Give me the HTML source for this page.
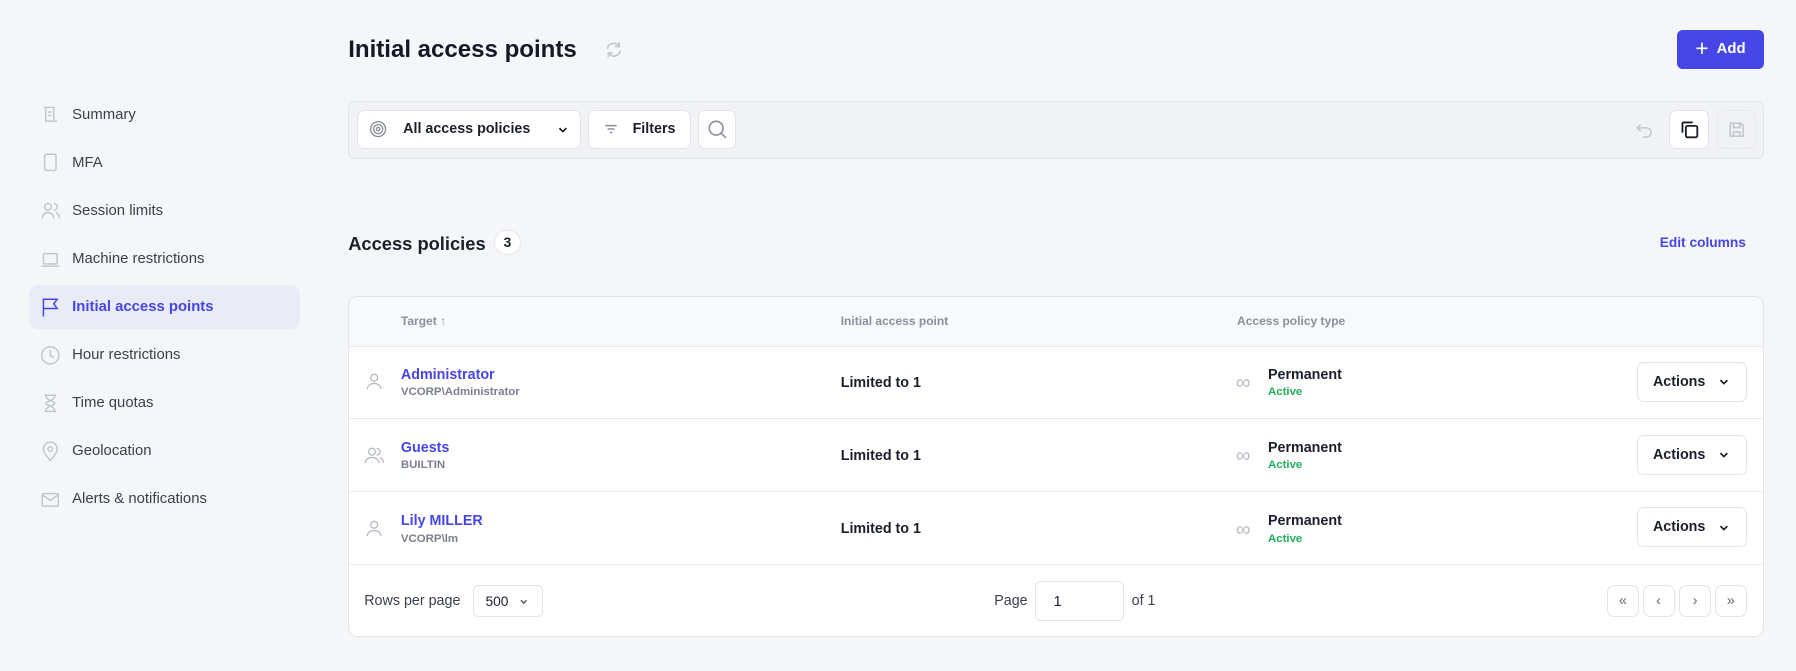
<!DOCTYPE html>
<html><head><style>
html{zoom:1.14541}
*{box-sizing:border-box;margin:0;padding:0}
body{width:1568px;height:586px;background:#f5f6f8;font-family:"Liberation Sans",sans-serif;color:#1b1f2c;position:relative;overflow:hidden;font-size:12.5px}
.a{position:absolute}
.nav{left:25px;width:237px;height:38px;display:flex;align-items:center;padding-left:10px;font-size:13px;color:#3a3f4c;border-radius:8px}
.nav svg{width:18px;height:18px;margin-right:10px;stroke:#c3c6cf;fill:none;stroke-width:1.3}
.nav.act{background:#e9ebf7;color:#4646e6;font-weight:bold}
.nav.act svg{stroke:#4646e6}
.btn{background:#fff;border:1px solid #e2e4e9;border-radius:6px;display:flex;align-items:center;justify-content:center;font-weight:bold;font-size:12.5px}
.row{left:304px;width:1236px;height:64px;border-top:1px solid #e6e8ec}
.lnk{color:#4646e6;font-weight:bold;font-size:12.5px}
.sub{color:#7a7f8c;font-size:10px;font-weight:bold}
</style></head><body>
<div class="a nav" style="top:81px"><svg viewBox="0 0 18 18"><path d="M3 3h9v12h3M5 3v12h10M7 7h3M7 10h3"/></svg>Summary</div>
<div class="a nav" style="top:123px"><svg viewBox="0 0 18 18"><rect x="4" y="2" width="10" height="14" rx="1.5"/></svg>MFA</div>
<div class="a nav" style="top:165px"><svg viewBox="0 0 18 18"><circle cx="7" cy="6" r="3"/><path d="M2 16c0-3 2-5 5-5s5 2 5 5M12 3a3 3 0 010 6M14 11c2 1 3 3 3 5"/></svg>Session limits</div>
<div class="a nav" style="top:207px"><svg viewBox="0 0 18 18"><rect x="3" y="4" width="12" height="9" rx="1"/><path d="M1 15h16"/></svg>Machine restrictions</div>
<div class="a nav act" style="top:249px"><svg viewBox="0 0 18 18"><path d="M3 17V2h12l-3 4 3 4H3"/></svg>Initial access points</div>
<div class="a nav" style="top:291px"><svg viewBox="0 0 18 18"><circle cx="9" cy="9" r="7.5"/><path d="M9 4v5l3 2"/></svg>Hour restrictions</div>
<div class="a nav" style="top:333px"><svg viewBox="0 0 18 18"><path d="M4 2h10M4 16h10M5 2c0 5 8 5 8 7s-8 2-8 7M13 2c0 5-8 5-8 7s8 2 8 7"/></svg>Time quotas</div>
<div class="a nav" style="top:375px"><svg viewBox="0 0 18 18"><path d="M9 17s-6-6-6-10a6 6 0 0112 0c0 4-6 10-6 10z"/><circle cx="9" cy="7" r="2"/></svg>Geolocation</div>
<div class="a nav" style="top:417px"><svg viewBox="0 0 18 18"><rect x="2" y="4" width="14" height="11" rx="1"/><path d="M2 5l7 5 7-5"/></svg>Alerts &amp; notifications</div>

<div class="a" style="left:304px;top:31px;font-size:21px;font-weight:bold;color:#141827">Initial access points</div>
<svg class="a" style="left:527px;top:35px" width="17" height="17" viewBox="0 0 18 18" fill="none" stroke="#c5c8d0" stroke-width="1.6"><path d="M3 8a6 6 0 0111-2M15 10a6 6 0 01-11 2M14 2v4h-4M4 16v-4h4"/></svg>
<div class="a" style="left:1464px;top:26px;width:76px;height:34px;background:#4646e6;border-radius:5px;color:#fff;font-weight:bold;font-size:13px;display:flex;align-items:center;justify-content:center"><span style="font-size:20px;font-weight:normal;margin-right:7px;margin-top:-2px">+</span>Add</div>

<div class="a" style="left:304px;top:88px;width:1236px;height:51px;background:#f1f2f5;border:1px solid #e2e4e9;border-radius:6px"></div>
<div class="a btn" style="left:312px;top:96px;width:195px;height:34px"><svg width="16" height="16" viewBox="0 0 16 16" fill="none" stroke="#8a8f9b" stroke-width="1.2" style="margin-right:14px"><circle cx="8" cy="8" r="6.5"/><circle cx="8" cy="8" r="4"/><circle cx="8" cy="8" r="1.5"/></svg>All access policies<svg width="12" height="12" viewBox="0 0 12 12" fill="none" stroke="#222" stroke-width="1.5" style="margin-left:22px"><path d="M3 4.5l3 3 3-3"/></svg></div>
<div class="a btn" style="left:513px;top:96px;width:90px;height:34px"><svg width="14" height="14" viewBox="0 0 14 14" stroke="#8a8f9b" stroke-width="1.3" style="margin-right:12px"><path d="M2 4h10M4 7h6M6 10h2"/></svg>Filters</div>
<div class="a btn" style="left:609px;top:96px;width:34px;height:34px"><svg width="18" height="18" viewBox="0 0 18 18" fill="none" stroke="#8a8f9b" stroke-width="1.4"><circle cx="8" cy="8" r="6"/><path d="M12.5 12.5l4 4"/></svg></div>
<svg class="a" style="left:1427px;top:106px" width="16" height="16" viewBox="0 0 16 16" fill="none" stroke="#c5c8d0" stroke-width="1.4"><path d="M5 3L2 6l3 3M2 6h8a4 4 0 010 8H7"/></svg>
<div class="a btn" style="left:1457px;top:96px;width:35px;height:34px"><svg width="18" height="18" viewBox="0 0 18 18" fill="none" stroke="#1b1f2c" stroke-width="1.6"><rect x="6" y="6" width="10" height="10" rx="1.5"/><path d="M3 12V4a1 1 0 011-1h8"/></svg></div>
<div class="a" style="left:1499px;top:96px;width:34px;height:34px;border:1px solid #e8e9ed;border-radius:6px;display:flex;align-items:center;justify-content:center"><svg width="17" height="17" viewBox="0 0 18 18" fill="none" stroke="#c5c8d0" stroke-width="1.5"><path d="M3 3h10l2 2v10H3z M6 3v4h6V3 M6 15v-4h6v4"/></svg></div>

<div class="a" style="left:304px;top:203px;font-size:16px;font-weight:bold">Access policies</div>
<div class="a" style="left:431px;top:201px;width:24px;height:22px;background:#fff;border:1px solid #e6e8ec;border-radius:11px;font-size:12px;font-weight:bold;display:flex;align-items:center;justify-content:center">3</div>
<div class="a lnk" style="left:1449px;top:205px;font-size:12px">Edit columns</div>

<div class="a" style="left:304px;top:258px;width:1236px;height:298px;background:#fff;border:1px solid #e2e4e9;border-radius:8px;overflow:hidden">
<div style="height:44px;background:#f8f9fb"></div></div>
<div class="a" style="left:350px;top:274px;font-size:10.5px;color:#8a8f9b;font-weight:bold">Target ↑</div>
<div class="a" style="left:734px;top:274px;font-size:10.5px;color:#8a8f9b;font-weight:bold">Initial access point</div>
<div class="a" style="left:1080px;top:274px;font-size:10.5px;color:#8a8f9b;font-weight:bold">Access policy type</div>

<div class="a row" style="top:302px"></div>
<div class="a row" style="top:365px"></div>
<div class="a row" style="top:429px"></div>
<div class="a row" style="top:492px;height:1px"></div>

<svg class="a" style="left:319px;top:325px" width="16" height="16" viewBox="0 0 16 16" fill="none" stroke="#b7bbc6" stroke-width="1.2"><circle cx="8" cy="5" r="3"/><path d="M2 15c0-3 3-5 6-5s6 2 6 5"/></svg>
<div class="a lnk" style="left:350px;top:320px">Administrator</div><div class="a sub" style="left:350px;top:337px">VCORP\Administrator</div>
<svg class="a" style="left:318px;top:389px" width="18" height="16" viewBox="0 0 18 16" fill="none" stroke="#b7bbc6" stroke-width="1.2"><circle cx="7" cy="5" r="3"/><path d="M1 15c0-3 3-5 6-5s6 2 6 5M11 2a3 3 0 010 6M14 10c2 1 3 3 3 5"/></svg>
<div class="a lnk" style="left:350px;top:384px">Guests</div><div class="a sub" style="left:350px;top:401px">BUILTIN</div>
<svg class="a" style="left:319px;top:453px" width="16" height="16" viewBox="0 0 16 16" fill="none" stroke="#b7bbc6" stroke-width="1.2"><circle cx="8" cy="5" r="3"/><path d="M2 15c0-3 3-5 6-5s6 2 6 5"/></svg>
<div class="a lnk" style="left:350px;top:448px">Lily MILLER</div><div class="a sub" style="left:350px;top:465px">VCORP\lm</div>

<div class="a" style="left:734px;top:327px;font-weight:bold">Limited to 1</div>
<div class="a" style="left:734px;top:391px;font-weight:bold">Limited to 1</div>
<div class="a" style="left:734px;top:455px;font-weight:bold">Limited to 1</div>

<div class="a" style="left:1079px;top:324px;color:#b7bbc6;font-size:18px">∞</div>
<div class="a" style="left:1107px;top:320px;font-weight:bold">Permanent</div><div class="a" style="left:1107px;top:337px;color:#1fae5b;font-size:10px;font-weight:bold">Active</div>
<div class="a" style="left:1079px;top:388px;color:#b7bbc6;font-size:18px">∞</div>
<div class="a" style="left:1107px;top:384px;font-weight:bold">Permanent</div><div class="a" style="left:1107px;top:401px;color:#1fae5b;font-size:10px;font-weight:bold">Active</div>
<div class="a" style="left:1079px;top:452px;color:#b7bbc6;font-size:18px">∞</div>
<div class="a" style="left:1107px;top:448px;font-weight:bold">Permanent</div><div class="a" style="left:1107px;top:465px;color:#1fae5b;font-size:10px;font-weight:bold">Active</div>

<div class="a btn" style="left:1429px;top:316px;width:96px;height:35px">Actions<svg width="12" height="12" viewBox="0 0 12 12" fill="none" stroke="#222" stroke-width="1.5" style="margin-left:10px"><path d="M3 4.5l3 3 3-3"/></svg></div>
<div class="a btn" style="left:1429px;top:380px;width:96px;height:35px">Actions<svg width="12" height="12" viewBox="0 0 12 12" fill="none" stroke="#222" stroke-width="1.5" style="margin-left:10px"><path d="M3 4.5l3 3 3-3"/></svg></div>
<div class="a btn" style="left:1429px;top:443px;width:96px;height:35px">Actions<svg width="12" height="12" viewBox="0 0 12 12" fill="none" stroke="#222" stroke-width="1.5" style="margin-left:10px"><path d="M3 4.5l3 3 3-3"/></svg></div>

<div class="a" style="left:318px;top:518px;color:#3a3f4c">Rows per page</div>
<div class="a" style="left:413px;top:511px;width:61px;height:28px;border:1px solid #e2e4e9;border-radius:5px;font-size:12px;display:flex;align-items:center;padding-left:10px">500<svg width="10" height="10" viewBox="0 0 12 12" fill="none" stroke="#555" stroke-width="1.5" style="margin-left:8px"><path d="M3 4.5l3 3 3-3"/></svg></div>
<div class="a" style="left:868px;top:518px;color:#3a3f4c">Page</div>
<div class="a" style="left:904px;top:507px;width:77px;height:35px;border:1px solid #e2e4e9;border-radius:5px;padding:11px 0 0 15px">1</div>
<div class="a" style="left:988px;top:518px;color:#3a3f4c">of 1</div>
<div class="a btn" style="left:1403px;top:511px;width:28px;height:28px;color:#666;font-weight:normal">«</div>
<div class="a btn" style="left:1434px;top:511px;width:28px;height:28px;color:#666;font-weight:normal">‹</div>
<div class="a btn" style="left:1466px;top:511px;width:28px;height:28px;color:#666;font-weight:normal">›</div>
<div class="a btn" style="left:1497px;top:511px;width:28px;height:28px;color:#666;font-weight:normal">»</div>
</body></html>
